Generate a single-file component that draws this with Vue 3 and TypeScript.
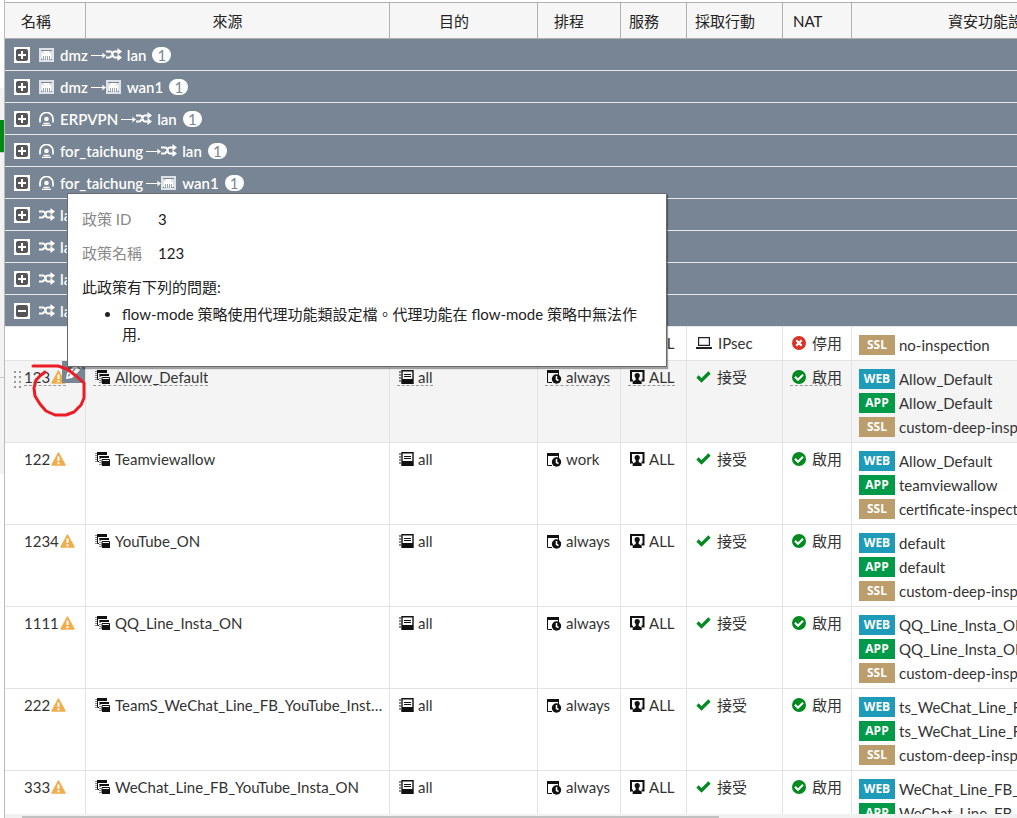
<script setup lang="ts">
import { defineComponent, h } from 'vue'

type IconName = 'port' | 'tunnel' | 'zone'

interface Endpoint { icon: IconName; name: string }
interface Group { from: Endpoint; to: Endpoint; count: number; open?: boolean }
interface Profile { kind: 'WEB' | 'APP' | 'SSL'; name: string }
interface Policy {
  name: string
  warn: boolean
  source: string
  dest: string
  schedule: string
  service: string
  ipsec?: boolean
  nat: boolean
  profiles: Profile[]
  active?: boolean
}

const shapes: Record<IconName, string> = {
  port: '<path d="M0 0h15v14H0z" fill="#dfe3e8"/><path d="M2 2.500h11M2 11.500h1.500M11.500 11.500H13" stroke="#788594"/><path d="M3 11V5.500h2V3h5v2.500h2V11z" fill="#fff"/><path d="M4.500 8v4M6.500 8v4M8.500 8v4M10.500 8v4" stroke="#9aa5b1"/>',
  tunnel: '<path d="M1 10.500V7a6.300 6.300 0 0 1 13 0v3.500" fill="none" stroke="#fff" stroke-width="1.700"/><circle cx="7.500" cy="7" r="2.300" fill="#fff"/><path d="M4.500 11.500h6M3 13.500h9" stroke="#fff" stroke-width="1.300"/>',
  zone: '<path d="M0 3.500h4.500c2 0 2 6 4 6H13M0 9.500h3.500c1 0 1.500-1 2-2M6.500 5.500c.5-1.300 1-2 2-2H13" fill="none" stroke="#fff" stroke-width="2.200"/><path d="M11.500 0l4.500 3.500-4.500 3.500zM11.500 6l4.500 3.500-4.500 3.500z" fill="#fff"/>',
}

const NetIcon = defineComponent({
  props: { name: { type: String, required: true } },
  setup(props) {
    return () => h('svg', {
      width: 16, height: 14, viewBox: '0 0 16 14', 'aria-hidden': 'true',
      innerHTML: shapes[props.name as IconName],
    })
  },
})

const lan: Endpoint = { icon: 'zone', name: 'lan' }
const wan: Endpoint = { icon: 'port', name: 'wan1' }
const dmz: Endpoint = { icon: 'port', name: 'dmz' }
const taichung: Endpoint = { icon: 'tunnel', name: 'for_taichung' }

const groups: Group[] = [
  { from: dmz, to: lan, count: 1 },
  { from: dmz, to: wan, count: 1 },
  { from: { icon: 'tunnel', name: 'ERPVPN' }, to: lan, count: 1 },
  { from: taichung, to: lan, count: 1 },
  { from: taichung, to: wan, count: 1 },
  { from: lan, to: dmz, count: 1 },
  { from: lan, to: { icon: 'tunnel', name: 'ERPVPN' }, count: 1 },
  { from: lan, to: taichung, count: 1 },
  { from: lan, to: wan, count: 7, open: true },
]

const columns = ['名稱', '來源', '目的', '排程', '服務', '採取行動', 'NAT', '資安功能設定檔']

function profiles(web: string, app: string, ssl: string): Profile[] {
  return [{ kind: 'WEB', name: web }, { kind: 'APP', name: app }, { kind: 'SSL', name: ssl }]
}

const base = { warn: true, dest: 'all', schedule: 'always', service: 'ALL', nat: true }
const policies: Policy[] = [
  { ...base, name: '', warn: false, source: 'all', ipsec: true, nat: false, profiles: [{ kind: 'SSL', name: 'no-inspection' }] },
  { ...base, name: '123', source: 'Allow_Default', active: true, profiles: profiles('Allow_Default', 'Allow_Default', 'custom-deep-inspection') },
  { ...base, name: '122', source: 'Teamviewallow', schedule: 'work', profiles: profiles('Allow_Default', 'teamviewallow', 'certificate-inspection') },
  { ...base, name: '1234', source: 'YouTube_ON', profiles: profiles('default', 'default', 'custom-deep-inspection') },
  { ...base, name: '1111', source: 'QQ_Line_Insta_ON', profiles: profiles('QQ_Line_Insta_ON', 'QQ_Line_Insta_ON', 'custom-deep-inspection') },
  { ...base, name: '222', source: 'TeamS_WeChat_Line_FB_YouTube_Insta_ON', profiles: profiles('ts_WeChat_Line_FB_YouTube', 'ts_WeChat_Line_FB_YouTube', 'custom-deep-inspection') },
  { ...base, name: '333', source: 'WeChat_Line_FB_YouTube_Insta_ON', profiles: profiles('WeChat_Line_FB_YouTube', 'WeChat_Line_FB_YouTube', 'custom-deep-inspection') },
]
</script>

<template>
  <div class="page">
    <aside class="rail">
      <div class="rail-item"></div>
      <div class="rail-current"></div>
      <div class="rail-section"></div>
      <div class="rail-footer"></div>
    </aside>
    <main class="panel">
      <div class="viewport">
        <table>
          <colgroup>
            <col class="c-name"><col class="c-source"><col class="c-dest"><col class="c-sched">
            <col class="c-serv"><col class="c-action"><col class="c-nat"><col class="c-prof">
          </colgroup>
          <thead>
            <tr>
              <th v-for="(c, i) in columns" :key="c" scope="col" :class="{ center: [1, 7].includes(i), near: i === 2, first: i === 0, sched: i === 3 }">{{ c }}</th>
            </tr>
          </thead>
          <tbody>
            <tr v-for="(g, i) in groups" :key="'g' + i" class="group">
              <td colspan="8">
                <div class="group-line">
                  <button class="toggle" type="button" :aria-expanded="!!g.open" :aria-label="g.from.name + ' → ' + g.to.name">
                    <svg width="16" height="16" viewBox="0 0 16 16" aria-hidden="true">
                      <path d="M0 0h16v16H0z" fill="#fff" /><rect x="2" y="2" width="12" height="12" rx="2" fill="#555" />
                      <path :d="g.open ? 'M4 8h8' : 'M4 8h8M8 4v8'" stroke="#fff" stroke-width="2" />
                    </svg>
                  </button>
                  <NetIcon class="from-icon" :name="g.from.icon" />
                  <span>{{ g.from.name }}</span>
                  <svg class="arrow" width="15" height="9" viewBox="0 0 15 9" aria-hidden="true"><path d="M0 4.500h13" stroke="#fff" /><path d="M11 1.500l4 3-4 3 .8-3z" fill="#fff" /></svg>
                  <NetIcon :name="g.to.icon" />
                  <span class="to-name">{{ g.to.name }}</span>
                  <span class="count">{{ g.count }}</span>
                </div>
              </td>
            </tr>
            <tr v-for="(p, i) in policies" :key="'p' + i" class="policy" :class="{ active: p.active }">
              <td class="name-cell">
                <svg v-if="p.active" class="grip" width="7" height="17" viewBox="0 0 7 17" aria-hidden="true">
                  <path d="M1 0v17M6 0v17" stroke="#999" stroke-width="2" stroke-dasharray="2 3" />
                </svg>
                <span v-if="p.warn" class="cell name">{{ p.name }}<svg class="warn" width="15" height="14" viewBox="0 0 15 14" aria-hidden="true"><path d="M7.500 1l6.500 12h-13z" fill="#f0ad4e" stroke="#f0ad4e" stroke-width="1.500" stroke-linejoin="round" /><path d="M7.500 4.500v4.500M7.500 10.200v2" stroke="#fff" stroke-width="2" /></svg></span>
                <button v-if="p.active" class="edit" type="button" aria-label="編輯">
                  <svg width="23" height="22" viewBox="0 0 23 22" aria-hidden="true"><path d="M4 18l1-6 8-8 5 5-8 8z" fill="#fff" /><path d="M6.500 15.500l1-2.500M9 12l4-4" fill="none" stroke="#788594" stroke-width="1.500" /><path d="M14 3l1-1 5 5-1 1z" fill="#fff" /></svg>
                </button>
                <svg v-if="p.active" class="scribble" width="56" height="56" viewBox="0 0 56 56" aria-hidden="true">
                  <path d="M2 4h25l9 3 8 6 9 8v15l-3 7-7 7-8 3H24l-9-4-6-7-5-8-1-8 2-8 5-5 4-3" fill="none" stroke="#ed1c24" stroke-width="3" stroke-linejoin="round" stroke-linecap="round" />
                </svg>
              </td>
              <td class="source-cell">
                <span class="cell">
                  <svg width="16" height="14" viewBox="0 0 16 14" aria-hidden="true"><path d="M1 1v9M5 4v10" stroke="#111" stroke-dasharray="1 1" /><path d="M2 0h10v3H2zM4.500 4H14v2H4.500z" fill="#111" /><path d="M2.500 3v6.500H4M7 7.500h7.500V13H7z" fill="none" stroke="#111" /><path d="M7 9h8v5H7z" fill="#111" /></svg>
                  <span class="clip">{{ p.source }}</span>
                </span>
              </td>
              <td>
                <span class="cell">
                  <svg width="15" height="14" viewBox="0 0 15 14" aria-hidden="true"><path d="M1 1v12" stroke="#111" stroke-dasharray="2 1" /><path d="M3 .7h11v12.500H3z" fill="none" stroke="#111" stroke-width="1.400" /><path d="M5 4.500h7M5 6.500h7" stroke="#111" /><path d="M3 9h11v5H3z" fill="#111" /></svg>
                  <span>{{ p.dest }}</span>
                </span>
              </td>
              <td>
                <span class="cell">
                  <svg width="15" height="15" viewBox="0 0 15 15" aria-hidden="true"><path d="M0 1h12v3H0z" fill="#111" /><path d="M.5 3v10.500H5M11.500 3v3" fill="none" stroke="#111" /><circle cx="9.500" cy="10" r="4.700" fill="#111" /><path d="M9.500 7v3.500l2 1" fill="none" stroke="#fff" stroke-width="1.500" /></svg>
                  <span>{{ p.schedule }}</span>
                </span>
              </td>
              <td>
                <span class="cell">
                  <svg width="15" height="14" viewBox="0 0 15 14" aria-hidden="true"><path d="M3 10.500H1V1h12.500v9.500h-2" fill="none" stroke="#111" stroke-width="2" /><circle cx="7.200" cy="5.500" r="2.600" fill="#111" /><path d="M5.700 7h3v3l3 1.500V14h-9v-2.500l3-1.500z" fill="#111" /></svg>
                  <span>{{ p.service }}</span>
                </span>
              </td>
              <td>
                <span class="cell plain">
                  <svg v-if="p.ipsec" width="16" height="14" viewBox="0 0 16 14" aria-hidden="true"><path d="M2.600 1.600h10.800v7.800H2.600z" fill="none" stroke="#222" stroke-width="1.200" /><path d="M0 11h16v2H0z" fill="#222" /></svg>
                  <svg v-else width="15" height="14" viewBox="0 0 15 14" aria-hidden="true"><path d="M1.500 6.500l4 4 8-8" fill="none" stroke="#008a20" stroke-width="3.200" /></svg>
                  <span>{{ p.ipsec ? 'IPsec' : '接受' }}</span>
                </span>
              </td>
              <td>
                <span class="cell nat">
                  <svg width="14" height="14" viewBox="0 0 14 14" aria-hidden="true">
                    <circle cx="7" cy="7" r="7" :fill="p.nat ? '#008a20' : '#db3226'" />
                    <path :d="p.nat ? 'M3 6.800l3 3 5-5' : 'M4.300 4.300l5.400 5.400M9.700 4.300l-5.400 5.400'" fill="none" stroke="#fff" stroke-width="2.200" />
                  </svg>
                  <span>{{ p.nat ? '啟用' : '停用' }}</span>
                </span>
              </td>
              <td class="prof-cell">
                <div v-for="f in p.profiles" :key="f.kind" class="profile">
                  <span class="tag" :class="f.kind.toLowerCase()">{{ f.kind }}</span>
                  <span>{{ f.name }}</span>
                </div>
              </td>
            </tr>
          </tbody>
        </table>
      </div>
      <div class="scroll-track"><div class="scroll-thumb"></div></div>
      <section class="tip" role="tooltip">
        <dl>
          <dt>政策 ID</dt><dd>3</dd>
          <dt>政策名稱</dt><dd>123</dd>
        </dl>
        <p>此政策有下列的問題:</p>
        <ul><li>flow-mode 策略使用代理功能類設定檔。代理功能在 flow-mode 策略中無法作用.</li></ul>
      </section>
    </main>
  </div>
</template>

<style>
body {
  margin: 0;
  overflow: hidden;
}
</style>

<style scoped>
.page {
  display: flex;
  height: 100vh;
  background: #fff;
  color: #333;
  font: 15px/20px Lato, "Noto Sans CJK TC", sans-serif;
}
.rail {
  flex: none;
  display: flex;
  flex-direction: column;
  width: 5px;
  padding-top: 88px;
  box-sizing: border-box;
  border-right: 1px solid #bbb;
  background: #fff;
}
.rail-item { height: 32px; background: #f3f3f3; }
.rail-current { height: 32px; background: #008a14; border-bottom: 1px solid #ccc; }
.rail-section { height: 224px; background: #f3f3f3; border-bottom: 1px solid #ccc; }
.rail-footer { height: 96px; background: #f3f3f3; }
.panel {
  position: relative;
  flex: 1;
  min-width: 0;
  display: flex;
  flex-direction: column;
  padding-top: 2px;
}
.viewport {
  flex: 1;
  min-height: 0;
  overflow: hidden;
}
table {
  width: 1145px;
  table-layout: fixed;
  border-collapse: separate;
  border-spacing: 0;
}
.c-name { width: 81px; }
.c-source { width: 304px; }
.c-dest { width: 148px; }
.c-sched { width: 83px; }
.c-serv { width: 66px; }
.c-action { width: 96px; }
.c-nat { width: 69px; }
.c-prof { width: 298px; }
th {
  box-sizing: border-box;
  height: 37px;
  padding: 0 8px;
  border: 1px solid #b0b0b0;
  border-left: 0;
  background: #f6f6f6;
  color: #222;
  font-weight: 400;
  text-align: left;
}
th:nth-child(7) { padding-left: 10px; }
th.first { padding-left: 16px; }
th.sched { padding-left: 16px; }
th.center { text-align: center; padding-right: 28px; }
th.center:last-child { padding-right: 8px; }
th.near { padding-left: 49px; }
td {
  box-sizing: border-box;
  padding: 0;
  vertical-align: top;
}
.group td {
  height: 32px;
  border-bottom: 1px solid #e6e8eb;
  background: #788594;
  color: #fff;
  font-weight: 600;
}
.group-line {
  display: flex;
  align-items: center;
  height: 31px;
  padding-left: 9px;
}
.toggle {
  flex: none;
  width: 16px;
  height: 16px;
  padding: 0;
  border: 0;
  background: none;
}
svg { flex: none; display: block; }
.from-icon { margin: 0 5px 0 9px; }
.arrow { margin: 2px 0 0 3px; }
.to-name { margin-left: 5px; }
.count {
  min-width: 19px;
  height: 16px;
  margin-left: 6px;
  border-radius: 8px;
  background: #fff;
  color: #788594;
  font-weight: 400;
  line-height: 16px;
  text-align: center;
}
.policy td {
  border-right: 1px solid #e3e3e3;
  border-bottom: 1px solid #e3e3e3;
  padding: 7px 7px 0;
}
.policy .source-cell { padding-right: 4px; }
.policy .prof-cell { padding: 6px 7px 3px; }
.active td { background: #f4f4f4; }
.policy .name-cell {
  position: relative;
  padding-left: 19px;
}
.cell {
  display: inline-flex;
  align-items: center;
  gap: 4px;
  max-width: 100%;
  height: 18px;
  padding-left: 2px;
  box-sizing: border-box;
  vertical-align: top;
}
.cell.name { gap: 1px; padding: 0; }
.cell.plain, .cell.nat { gap: 6px; }
.clip {
  overflow: hidden;
  text-overflow: ellipsis;
  white-space: nowrap;
}
.active .cell:not(.plain) { border-bottom: 1px dashed #999; }
.grip {
  position: absolute;
  left: 9px;
  top: 10px;
}
.edit {
  position: absolute;
  right: 0;
  top: 0;
  width: 23px;
  height: 22px;
  padding: 0;
  border: 0;
  background: #788594;
}
.scribble {
  position: absolute;
  left: 26px;
  top: 1px;
  z-index: 2;
}
.profile {
  display: flex;
  align-items: center;
  gap: 4px;
  height: 24px;
  white-space: nowrap;
}
.tag {
  width: 36px;
  height: 20px;
  color: #fff;
  font: 700 12px/20px "Open Sans", sans-serif;
  text-align: center;
}
.web { background: #1f9bba; }
.app { background: #009a49; }
.ssl { background: #bb9e6c; }
.scroll-track {
  flex: none;
  height: 4px;
  box-sizing: border-box;
  padding: 2px 0 0 17px;
  background: #f1f1f1;
}
.scroll-thumb {
  width: 70%;
  height: 2px;
  background: #c1c1c1;
}
.tip {
  position: absolute;
  left: 62px;
  top: 193px;
  box-sizing: border-box;
  width: 600px;
  padding: 15px 24px 22px 14px;
  border: 1px solid #66696d;
  background: #fff;
  box-shadow: 1px 2px 1px rgba(0, 0, 0, .35);
  color: #222;
}
dl {
  display: grid;
  grid-template-columns: 61px 1fr;
  gap: 14px 15px;
  margin: 0;
}
dt { color: #888; }
dd { margin: 0; }
p { margin: 14px 0 7px; }
ul { margin: 0; padding-left: 40px; }
</style>
